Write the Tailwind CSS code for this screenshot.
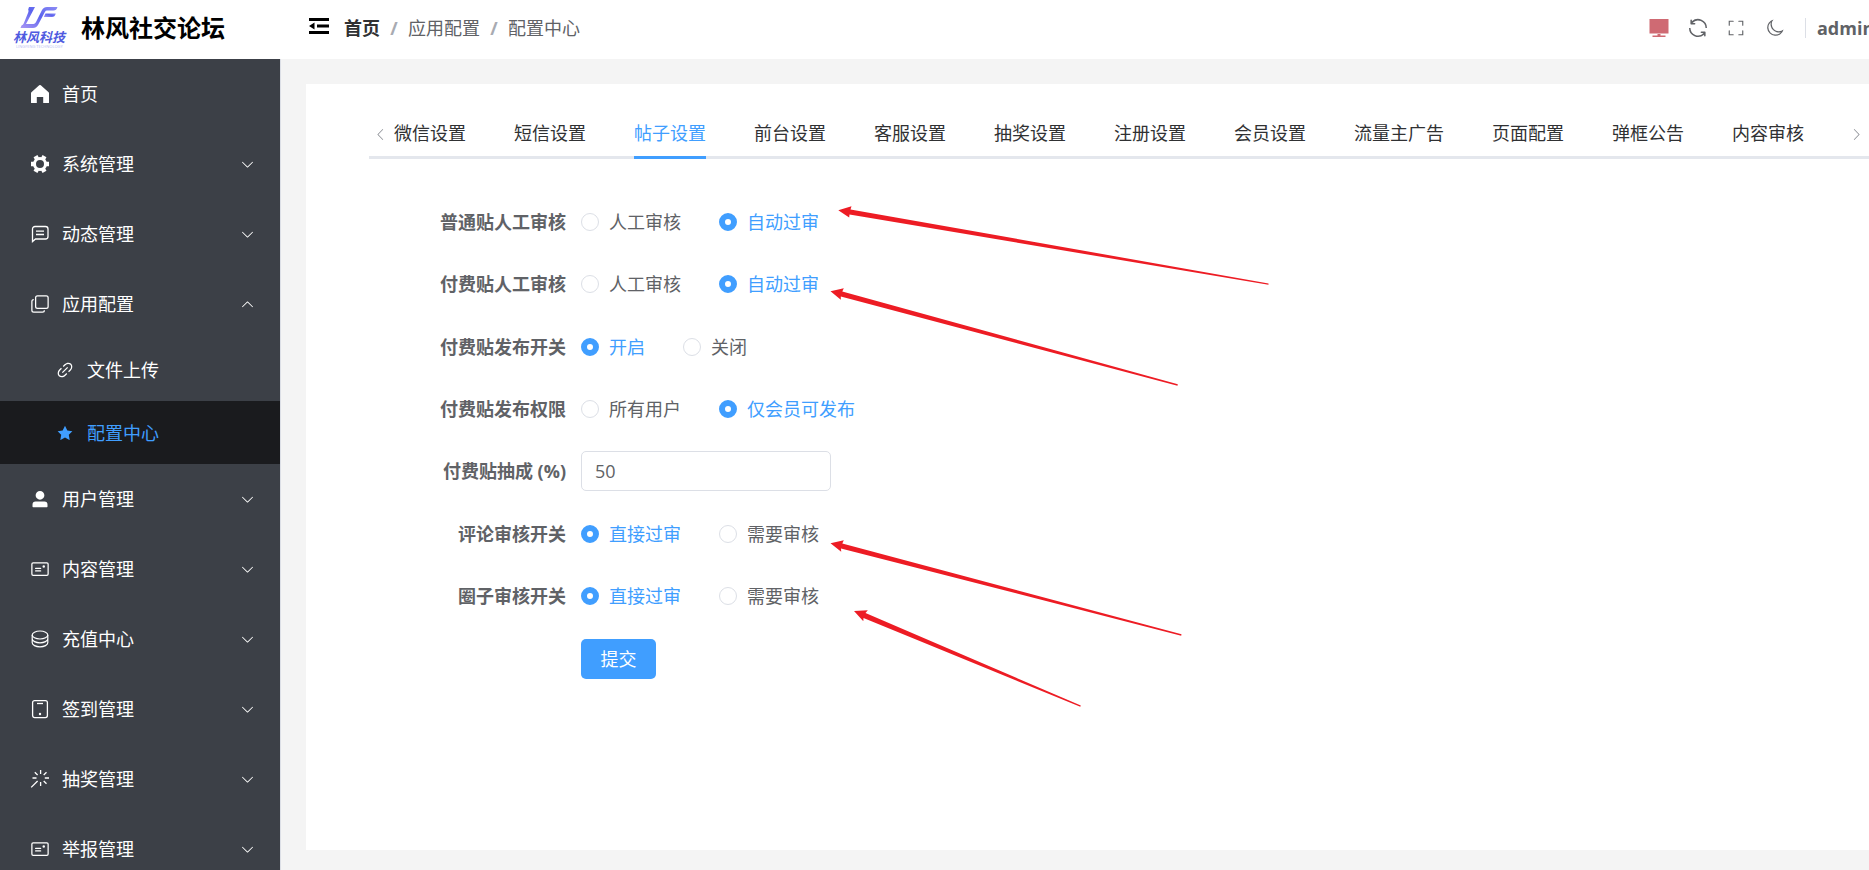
<!DOCTYPE html>
<html lang="zh-CN">
<head>
<meta charset="utf-8">
<meta name="viewport" content="width=device-width, initial-scale=1">
<title>林风社交论坛 - 配置中心</title>
<script src="https://cdn.jsdelivr.net/npm/@tailwindcss/browser@4"></script>
</head>
<body class="relative flex h-screen flex-col overflow-hidden bg-[#f4f4f4] font-['Open_Sans','Noto_Sans_CJK_SC',sans-serif] text-lg leading-6 text-[#606266]">

<svg class="hidden" aria-hidden="true">
  <symbol id="down" viewBox="0 0 1024 1024"><path d="M831.872 340.864 512 652.672 192.128 340.864a30.592 30.592 0 0 0-42.752 0 29.12 29.12 0 0 0 0 41.6L489.664 714.24a32 32 0 0 0 44.672 0l340.288-331.712a29.12 29.12 0 0 0 0-41.728 30.592 30.592 0 0 0-42.752 0z"/></symbol>
  <symbol id="postcard" viewBox="0 0 1024 1024"><path d="M160 224a32 32 0 0 0-32 32v512a32 32 0 0 0 32 32h704a32 32 0 0 0 32-32V256a32 32 0 0 0-32-32zm0-64h704a96 96 0 0 1 96 96v512a96 96 0 0 1-96 96H160a96 96 0 0 1-96-96V256a96 96 0 0 1 96-96"/><path d="M704 320a64 64 0 1 1 0 128 64 64 0 0 1 0-128M288 448h256q32 0 32 32t-32 32H288q-32 0-32-32t32-32m0 128h256q32 0 32 32t-32 32H288q-32 0-32-32t32-32"/></symbol>
</svg>

<header class="flex h-[59px] shrink-0 items-center overflow-hidden bg-white pb-1">
  <div class="flex w-[281px] shrink-0 items-center gap-[13px] pl-3">
    <svg class="h-[48px] w-14 overflow-visible" viewBox="12 3 56 48" role="img" aria-label="林风科技">
      <defs><linearGradient id="lf" x1="0" y1="1" x2="1" y2="0"><stop offset="0" stop-color="#a896f4"/><stop offset=".55" stop-color="#5b63ee"/><stop offset="1" stop-color="#8d8cf4"/></linearGradient></defs>
      <g fill="url(#lf)">
        <path d="M29 6h6l-9 17h7.500q1.500 0 2.400-1.700L42 9q1.700-3 5-3h10.500q-1 3.500-4 3.500H47q-1.300 0-2 1.300L38 24q-1.700 3-5 3H20.500l1-2.500q1.500-.5 2.200-2l4.500-11q.7-1.500 0-3z"/>
        <path d="M45.500 12.500h10.300q-1 3.500-4 3.500h-8z"/>
      </g>
      <text x="13" y="41" font-size="13" font-style="italic" font-weight="700" fill="#4f5ae0">林风科技</text>
      <text x="16" y="47" font-size="4" fill="#b9bdf2">LINGFENG TECHNOLOGY</text>
    </svg>
    <h1 class="text-2xl font-bold text-black">林风社交论坛</h1>
  </div>
  <button type="button" aria-label="折叠菜单" class="ml-7 pb-1 text-black">
    <svg class="h-4 w-5" viewBox="0 0 20 16" fill="currentColor"><path d="M0 0h20v3H0zM8 6.500h12v3H8zM0 13h20v3H0zM5.500 4.500v7L0 8z"/></svg>
  </button>
  <nav aria-label="面包屑" class="ml-[15px] flex items-center">
    <a href="#" class="font-bold text-[#303133]">首页</a>
    <span class="w-7 text-center font-bold text-[#a8abb2]">/</span>
    <a href="#">应用配置</a>
    <span class="w-7 text-center font-bold text-[#a8abb2]">/</span>
    <span>配置中心</span>
  </nav>
  <div class="ml-auto flex shrink-0 items-center">
    <button type="button" aria-label="屏幕" class="text-[#cf6a73]">
      <svg class="h-5 w-5" viewBox="0 0 20 20" fill="currentColor"><path d="M.5 1h19v14.500H.5zM8.500 16h3v1.500h5V19h-13v-1.500h5z"/></svg>
    </button>
    <button type="button" aria-label="刷新" class="ml-[17px]">
      <svg class="h-6 w-6" viewBox="0 0 1024 1024" fill="currentColor"><path d="M771.776 794.88A384 384 0 0 1 128 512h64a320 320 0 0 0 555.712 216.448H654.72a32 32 0 1 1 0-64h149.056a32 32 0 0 1 32 32v148.928a32 32 0 1 1-64 0v-50.56zM276.288 295.616h92.992a32 32 0 0 1 0 64H220.160a32 32 0 0 1-32-32V178.560a32 32 0 0 1 64 0v50.560A384 384 0 0 1 896.128 512h-64a320 320 0 0 0-555.776-216.384z"/></svg>
    </button>
    <button type="button" aria-label="全屏" class="ml-[17px]">
      <svg class="h-[18px] w-[18px]" viewBox="0 0 1024 1024" fill="currentColor"><path d="m160 96.064 192 .192a32 32 0 0 1 0 64l-192-.192V352a32 32 0 0 1-64 0V96h64zm0 831.872V928H96V672a32 32 0 1 1 64 0v191.936l192-.192a32 32 0 1 1 0 64zM864 96.064V96h64v256a32 32 0 1 1-64 0V160.064l-192 .192a32 32 0 1 1 0-64zm0 831.872-192-.192a32 32 0 0 1 0-64l192 .192V672a32 32 0 1 1 64 0v256h-64z"/></svg>
    </button>
    <button type="button" aria-label="深色模式" class="ml-[21px]">
      <svg class="h-[19px] w-[19px]" viewBox="0 0 1024 1024" fill="currentColor"><path d="M240.448 240.448a384 384 0 1 0 559.424 525.696 448 448 0 0 1-542.016-542.080 390.592 390.592 0 0 0-17.408 16.384m181.056 362.048a384 384 0 0 0 525.632 16.384A448 448 0 1 1 405.056 76.800a384 384 0 0 0 16.448 525.696"/></svg>
    </button>
    <span class="ml-5 h-5 w-px bg-[#dcdfe6]"></span>
    <span class="ml-[11px] w-[52px] overflow-hidden font-bold whitespace-nowrap">admin</span>
  </div>
</header>

<div class="flex min-h-0 flex-1">
  <aside class="w-[281px] shrink-0 overflow-hidden border-r border-[#dcdfe6] bg-[#3c4047] text-white">
    <nav aria-label="主菜单">
      <a href="#" class="flex h-[70px] items-center gap-3 px-[30px]">
        <svg class="h-5 w-5" viewBox="0 0 20 20" fill="currentColor"><path d="M9.200 1.300a1.200 1.200 0 0 1 1.600 0l7.800 6.900q.4.400.4.900v9.400q0 .5-.5.500h-5.300v-6H6.800v6H1.500Q1 19 1 18.500V9.100q0-.5.400-.9z"/></svg>
        <span>首页</span>
      </a>
      <button type="button" class="flex h-[70px] w-full items-center gap-3 pr-[25px] pl-[30px]">
        <svg class="h-5 w-5" viewBox="0 0 20 20" fill="none" stroke="currentColor"><circle cx="10" cy="10" r="5.500" stroke-width="3"/><path d="M1 10h3M16 10h3M5.500 2.200 7 4.800M13 15.200l1.500 2.600M5.500 17.800 7 15.200M13 4.800l1.500-2.600" stroke-width="4.500"/></svg>
        <span>系统管理</span>
        <svg class="ml-auto h-[15px] w-[15px]" fill="currentColor"><use href="#down"/></svg>
      </button>
      <button type="button" class="flex h-[70px] w-full items-center gap-3 pr-[25px] pl-[30px]">
        <svg class="h-5 w-5" viewBox="0 0 20 20" fill="none" stroke="currentColor" stroke-width="1.300"><path d="M2.500 17.500V5A2.500 2.500 0 0 1 5 2.500h10.500A2.500 2.500 0 0 1 18 5v7.500a2.500 2.500 0 0 1-2.500 2.500H5.500zM6 7.200h8M6 10.500h8"/></svg>
        <span>动态管理</span>
        <svg class="ml-auto h-[15px] w-[15px]" fill="currentColor"><use href="#down"/></svg>
      </button>
      <button type="button" aria-expanded="true" class="flex h-[70px] w-full items-center gap-3 pr-[25px] pl-[30px]">
        <svg class="h-5 w-5" viewBox="0 0 1024 1024" fill="currentColor"><path d="M768 832a128 128 0 0 1-128 128H192A128 128 0 0 1 64 832V384a128 128 0 0 1 128-128v64a64 64 0 0 0-64 64v448a64 64 0 0 0 64 64h448a64 64 0 0 0 64-64z"/><path d="M384 128a64 64 0 0 0-64 64v448a64 64 0 0 0 64 64h448a64 64 0 0 0 64-64V192a64 64 0 0 0-64-64zm0-64h448a128 128 0 0 1 128 128v448a128 128 0 0 1-128 128H384a128 128 0 0 1-128-128V192A128 128 0 0 1 384 64"/></svg>
        <span>应用配置</span>
        <svg class="ml-auto h-[15px] w-[15px] rotate-180" fill="currentColor"><use href="#down"/></svg>
      </button>
      <a href="#" class="flex h-[62px] items-center gap-3 pl-[55px]">
        <svg class="h-5 w-5" viewBox="0 0 1024 1024" fill="currentColor"><path d="M715.648 625.152 670.400 579.904l90.496-90.560c75.008-74.944 85.120-186.368 22.656-248.896-62.528-62.464-173.952-52.352-248.960 22.656L444.160 353.600l-45.248-45.248 90.496-90.496c100.032-99.968 251.968-110.080 339.456-22.656 87.488 87.488 77.312 239.424-22.656 339.456l-90.496 90.496zm-90.496 90.496-90.496 90.496C434.624 906.112 282.688 916.224 195.200 828.800c-87.488-87.488-77.312-239.424 22.656-339.456l90.496-90.496 45.248 45.248-90.496 90.560c-75.008 74.944-85.120 186.368-22.656 248.896 62.528 62.464 173.952 52.352 248.960-22.656l90.496-90.496zm0-362.048 45.248 45.248L398.848 670.400 353.600 625.152z"/></svg>
        <span>文件上传</span>
      </a>
      <a href="#" aria-current="page" class="flex h-[63px] items-center gap-3 bg-[#1a1b1e] pl-[55px] text-[#409eff]">
        <svg class="h-5 w-5" viewBox="0 0 1024 1024" fill="currentColor"><path d="M283.840 867.840 512 747.776l228.160 119.936a6.400 6.400 0 0 0 9.280-6.720l-43.520-254.080 184.512-179.904a6.400 6.400 0 0 0-3.520-10.880l-255.104-37.120L517.760 147.904a6.400 6.400 0 0 0-11.520 0L392.192 379.072l-255.104 37.120a6.400 6.400 0 0 0-3.520 10.880L318.080 606.976l-43.584 254.080a6.400 6.400 0 0 0 9.280 6.720z"/></svg>
        <span>配置中心</span>
      </a>
      <button type="button" class="flex h-[70px] w-full items-center gap-3 pr-[25px] pl-[30px]">
        <svg class="h-5 w-5" viewBox="0 0 1024 1024" fill="currentColor"><path d="M288 320a224 224 0 1 0 448 0 224 224 0 1 0-448 0m544 608H160a32 32 0 0 1-32-32v-96a160 160 0 0 1 160-160h448a160 160 0 0 1 160 160v96a32 32 0 0 1-32 32z"/></svg>
        <span>用户管理</span>
        <svg class="ml-auto h-[15px] w-[15px]" fill="currentColor"><use href="#down"/></svg>
      </button>
      <button type="button" class="flex h-[70px] w-full items-center gap-3 pr-[25px] pl-[30px]">
        <svg class="h-5 w-5" fill="currentColor"><use href="#postcard"/></svg>
        <span>内容管理</span>
        <svg class="ml-auto h-[15px] w-[15px]" fill="currentColor"><use href="#down"/></svg>
      </button>
      <button type="button" class="flex h-[70px] w-full items-center gap-3 pr-[25px] pl-[30px]">
        <svg class="h-5 w-5" viewBox="0 0 20 20" fill="none" stroke="currentColor" stroke-width="1.200"><ellipse cx="10" cy="6" rx="7.800" ry="4"/><path d="M2.200 6v3.800c0 2.200 3.500 4 7.800 4s7.800-1.800 7.800-4V6M2.200 9.800v4c0 2.200 3.500 4 7.800 4s7.800-1.800 7.800-4v-4"/></svg>
        <span>充值中心</span>
        <svg class="ml-auto h-[15px] w-[15px]" fill="currentColor"><use href="#down"/></svg>
      </button>
      <button type="button" class="flex h-[70px] w-full items-center gap-3 pr-[25px] pl-[30px]">
        <svg class="h-5 w-5" viewBox="0 0 20 20" fill="none" stroke="currentColor" stroke-width="1.300"><rect x="2.600" y="1.600" width="14.800" height="17" rx="2"/><path d="M7 4.500h6"/><circle cx="10" cy="15" r="1.200" fill="currentColor" stroke="none"/></svg>
        <span>签到管理</span>
        <svg class="ml-auto h-[15px] w-[15px]" fill="currentColor"><use href="#down"/></svg>
      </button>
      <button type="button" class="flex h-[70px] w-full items-center gap-3 pr-[25px] pl-[30px]">
        <svg class="h-5 w-5" viewBox="0 0 20 20" fill="none" stroke="currentColor" stroke-width="1.300"><path d="M10.600 1v4M10.600 13v4M2.500 9h4M14.800 9H19M4.800 3.200l2.800 2.800M16.500 3.200 13.700 6M13.700 12l2.800 2.800M7.600 12 1.200 18.400"/></svg>
        <span>抽奖管理</span>
        <svg class="ml-auto h-[15px] w-[15px]" fill="currentColor"><use href="#down"/></svg>
      </button>
      <button type="button" class="flex h-[70px] w-full items-center gap-3 pr-[25px] pl-[30px]">
        <svg class="h-5 w-5" fill="currentColor"><use href="#postcard"/></svg>
        <span>举报管理</span>
        <svg class="ml-auto h-[15px] w-[15px]" fill="currentColor"><use href="#down"/></svg>
      </button>
    </nav>
  </aside>

  <main class="flex min-w-0 flex-1 pt-[25px] pb-5 pl-[25px]">
    <section class="min-w-0 flex-1 bg-white pt-[25px] pl-[63px]">
      <div class="flex h-[50px] items-center border-b-[3px] border-[#e4e7ed]">
        <button type="button" aria-label="向左" class="w-[25px] shrink-0 pt-1 pl-1 text-[#909399]">
          <svg class="h-[15px] w-[15px] rotate-90" fill="currentColor"><use href="#down"/></svg>
        </button>
        <div role="tablist" class="-mb-[3px] flex h-[50px] min-w-0 flex-1 gap-12 overflow-hidden whitespace-nowrap text-[#303133]">
          <button type="button" role="tab" class="pb-[3px]">微信设置</button>
          <button type="button" role="tab" class="pb-[3px]">短信设置</button>
          <button type="button" role="tab" aria-selected="true" class="border-b-[3px] border-[#409eff] text-[#409eff]">帖子设置</button>
          <button type="button" role="tab" class="pb-[3px]">前台设置</button>
          <button type="button" role="tab" class="pb-[3px]">客服设置</button>
          <button type="button" role="tab" class="pb-[3px]">抽奖设置</button>
          <button type="button" role="tab" class="pb-[3px]">注册设置</button>
          <button type="button" role="tab" class="pb-[3px]">会员设置</button>
          <button type="button" role="tab" class="pb-[3px]">流量主广告</button>
          <button type="button" role="tab" class="pb-[3px]">页面配置</button>
          <button type="button" role="tab" class="pb-[3px]">弹框公告</button>
          <button type="button" role="tab" class="pb-[3px]">内容审核</button>
        </div>
        <button type="button" aria-label="向右" class="w-5 shrink-0 pt-1 text-[#909399]">
          <svg class="h-[15px] w-[15px] -rotate-90" fill="currentColor"><use href="#down"/></svg>
        </button>
      </div>

      <form class="pt-[43px]">
        <fieldset class="mb-[22px] flex h-10 items-center gap-[15px]">
          <legend class="float-left w-[197px] text-right font-bold">普通贴人工审核</legend>
          <div class="flex gap-[38px]">
            <label class="flex items-center gap-[10px] has-checked:text-[#409eff]"><input type="radio" name="normal" class="h-[18px] w-[18px] appearance-none rounded-full border border-[#dcdfe6] bg-white checked:border-6 checked:border-[#409eff]">人工审核</label>
            <label class="flex items-center gap-[10px] has-checked:text-[#409eff]"><input type="radio" name="normal" checked class="h-[18px] w-[18px] appearance-none rounded-full border border-[#dcdfe6] bg-white checked:border-6 checked:border-[#409eff]">自动过审</label>
          </div>
        </fieldset>
        <fieldset class="mb-[23px] flex h-10 items-center gap-[15px]">
          <legend class="float-left w-[197px] text-right font-bold">付费贴人工审核</legend>
          <div class="flex gap-[38px]">
            <label class="flex items-center gap-[10px] has-checked:text-[#409eff]"><input type="radio" name="paid" class="h-[18px] w-[18px] appearance-none rounded-full border border-[#dcdfe6] bg-white checked:border-6 checked:border-[#409eff]">人工审核</label>
            <label class="flex items-center gap-[10px] has-checked:text-[#409eff]"><input type="radio" name="paid" checked class="h-[18px] w-[18px] appearance-none rounded-full border border-[#dcdfe6] bg-white checked:border-6 checked:border-[#409eff]">自动过审</label>
          </div>
        </fieldset>
        <fieldset class="mb-[22px] flex h-10 items-center gap-[15px]">
          <legend class="float-left w-[197px] text-right font-bold">付费贴发布开关</legend>
          <div class="flex gap-[38px]">
            <label class="flex items-center gap-[10px] has-checked:text-[#409eff]"><input type="radio" name="publish" checked class="h-[18px] w-[18px] appearance-none rounded-full border border-[#dcdfe6] bg-white checked:border-6 checked:border-[#409eff]">开启</label>
            <label class="flex items-center gap-[10px] has-checked:text-[#409eff]"><input type="radio" name="publish" class="h-[18px] w-[18px] appearance-none rounded-full border border-[#dcdfe6] bg-white checked:border-6 checked:border-[#409eff]">关闭</label>
          </div>
        </fieldset>
        <fieldset class="mb-[22px] flex h-10 items-center gap-[15px]">
          <legend class="float-left w-[197px] text-right font-bold">付费贴发布权限</legend>
          <div class="flex gap-[38px]">
            <label class="flex items-center gap-[10px] has-checked:text-[#409eff]"><input type="radio" name="right" class="h-[18px] w-[18px] appearance-none rounded-full border border-[#dcdfe6] bg-white checked:border-6 checked:border-[#409eff]">所有用户</label>
            <label class="flex items-center gap-[10px] has-checked:text-[#409eff]"><input type="radio" name="right" checked class="h-[18px] w-[18px] appearance-none rounded-full border border-[#dcdfe6] bg-white checked:border-6 checked:border-[#409eff]">仅会员可发布</label>
          </div>
        </fieldset>
        <div class="mb-[23px] flex h-10 items-center gap-[15px]">
          <label for="rate" class="w-[197px] text-right font-bold">付费贴抽成 (%)</label>
          <input id="rate" type="text" value="50" class="h-10 w-[250px] rounded-[5px] border border-[#dcdfe6] px-[13px]">
        </div>
        <fieldset class="mb-[22px] flex h-10 items-center gap-[15px]">
          <legend class="float-left w-[197px] text-right font-bold">评论审核开关</legend>
          <div class="flex gap-[38px]">
            <label class="flex items-center gap-[10px] has-checked:text-[#409eff]"><input type="radio" name="comment" checked class="h-[18px] w-[18px] appearance-none rounded-full border border-[#dcdfe6] bg-white checked:border-6 checked:border-[#409eff]">直接过审</label>
            <label class="flex items-center gap-[10px] has-checked:text-[#409eff]"><input type="radio" name="comment" class="h-[18px] w-[18px] appearance-none rounded-full border border-[#dcdfe6] bg-white checked:border-6 checked:border-[#409eff]">需要审核</label>
          </div>
        </fieldset>
        <fieldset class="mb-[23px] flex h-10 items-center gap-[15px]">
          <legend class="float-left w-[197px] text-right font-bold">圈子审核开关</legend>
          <div class="flex gap-[38px]">
            <label class="flex items-center gap-[10px] has-checked:text-[#409eff]"><input type="radio" name="circle" checked class="h-[18px] w-[18px] appearance-none rounded-full border border-[#dcdfe6] bg-white checked:border-6 checked:border-[#409eff]">直接过审</label>
            <label class="flex items-center gap-[10px] has-checked:text-[#409eff]"><input type="radio" name="circle" class="h-[18px] w-[18px] appearance-none rounded-full border border-[#dcdfe6] bg-white checked:border-6 checked:border-[#409eff]">需要审核</label>
          </div>
        </fieldset>
        <button type="submit" class="ml-[212px] h-10 w-[75px] rounded-[5px] bg-[#409eff] text-white">提交</button>
      </form>
    </section>
  </main>
</div>

<!-- Annotation arrows pointing at the review options -->
<svg class="pointer-events-none absolute inset-0 h-full w-full" fill="#ed1c24" aria-hidden="true">
  <path d="M838.300 210.300 851.500 206.200 850.500 209.500 1268.500 283.400V284.800L849.500 214.600 849.200 217.500Z"/>
  <path d="M830.500 291.300 843.800 288.200 842.300 291.500 1177.800 384.300 1177.500 385.700 840.800 296.500 840.800 299.800Z"/>
  <path d="M830.500 543.300 843.800 540.300 842.300 543.500 1181.500 634.300 1181.200 635.700 841 548.500 841.200 551.800Z"/>
  <path d="M854 611 867.800 610.200 865.500 613 1080.800 705.500 1080.300 706.800 863.500 617.900 863.300 621.300Z"/>
</svg>
</body>
</html>
